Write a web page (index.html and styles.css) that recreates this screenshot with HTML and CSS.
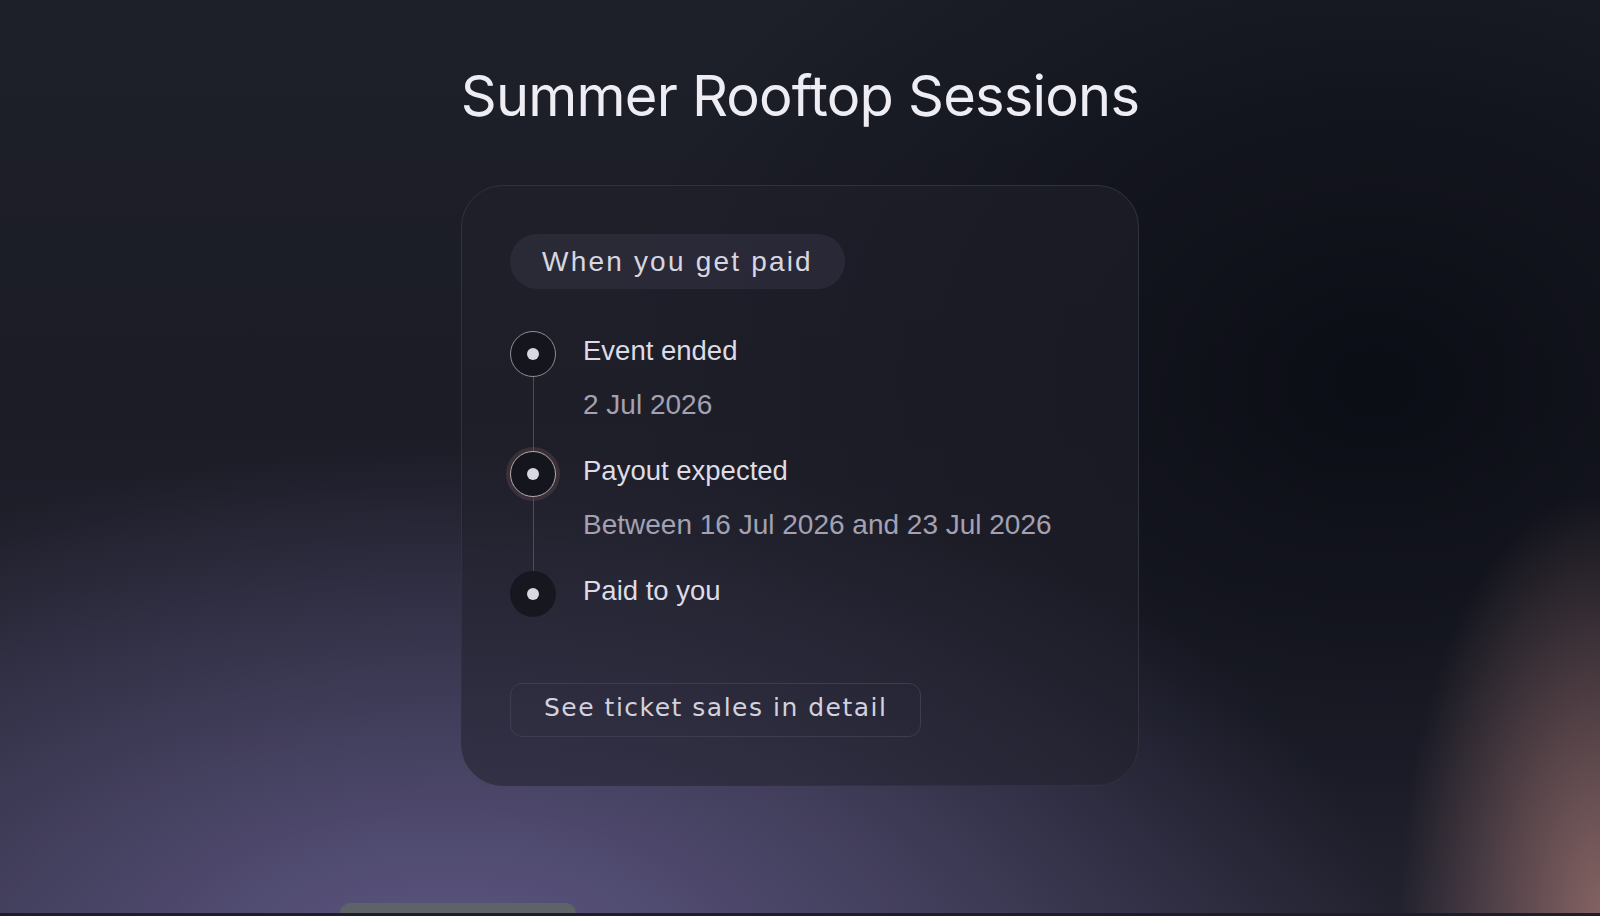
FILE: index.html
```html
<!DOCTYPE html>
<html lang="en">
<head>
<meta charset="utf-8">
<title>Summer Rooftop Sessions</title>
<link rel="stylesheet" href="styles.css">
</head>
<body>
<main class="page">
  <h1 class="title">Summer Rooftop Sessions</h1>
  <section class="card">
    <div class="pill">When you get paid</div>
    <ol class="timeline">
      <li class="step step-done">
        <div class="marker"><span class="dot"></span><span class="line"></span></div>
        <div class="body">
          <div class="step-title">Event ended</div>
          <div class="step-sub">2 Jul 2026</div>
        </div>
      </li>
      <li class="step step-current">
        <div class="marker"><span class="dot"></span><span class="line"></span></div>
        <div class="body">
          <div class="step-title">Payout expected</div>
          <div class="step-sub">Between 16 Jul 2026 and 23 Jul 2026</div>
        </div>
      </li>
      <li class="step step-future step-last">
        <div class="marker"><span class="dot"></span></div>
        <div class="body">
          <div class="step-title">Paid to you</div>
        </div>
      </li>
    </ol>
    <button class="detail-btn" type="button">See ticket sales in detail</button>
  </section>
  <div class="blob" aria-hidden="true"></div>
</main>
</body>
</html>
```
FILE: styles.css
```css
html {
  background: #1d1e2a;
}
body {
  margin: 0;
}
.page {
  position: relative;
  min-height: 913px;
  box-sizing: border-box;
  padding-top: 63px;
  display: flex;
  flex-direction: column;
  align-items: center;
  overflow: hidden;
  background:
    radial-gradient(ellipse 200px 420px at 100% 100%, rgba(132, 98, 98, 1), rgba(132, 98, 98, 0) 100%),
    radial-gradient(ellipse 950px 520px at 28% 106%, rgba(94, 87, 132, 1), rgba(94, 87, 132, 0) 100%),
    radial-gradient(ellipse 760px 620px at 86% 42%, rgba(11, 13, 21, 0.95), rgba(11, 13, 21, 0) 100%),
    linear-gradient(180deg, #1d1f29 0%, #1b1c26 45%, #262634 100%);
}
.title {
  margin: 0;
  font-family: "Inter", "Liberation Sans", sans-serif;
  font-weight: 400;
  font-size: 56px;
  line-height: 67px;
  letter-spacing: -0.8px;
  color: #eeedf3;
}
.card {
  margin-top: 55px;
  width: 678px;
  box-sizing: border-box;
  border: 1px solid #32323f;
  border-radius: 42px;
  padding: 48px;
  background: rgba(32, 32, 44, 0.55);
  display: flex;
  flex-direction: column;
  align-items: flex-start;
}
.pill {
  height: 55px;
  line-height: 55px;
  padding: 0 32px;
  border-radius: 28px;
  background: rgba(58, 56, 74, 0.45);
  font-family: "Liberation Sans", Arial, sans-serif;
  font-size: 28px;
  letter-spacing: 2.2px;
  color: #d7d6e1;
}
.timeline {
  list-style: none;
  margin: 42px 0 0;
  padding: 0;
}
.step {
  display: flex;
  gap: 27px;
}
.marker {
  width: 46px;
  display: flex;
  flex-direction: column;
  align-items: center;
}
.dot {
  width: 46px;
  height: 46px;
  flex: none;
  box-sizing: border-box;
  border-radius: 50%;
  background: #14151d;
  display: flex;
  align-items: center;
  justify-content: center;
}
.dot::after {
  content: "";
  width: 12px;
  height: 12px;
  border-radius: 50%;
  background: #d9d8e3;
}
.step-done .dot {
  border: 1.5px solid #8d9092;
}
.step-current .dot {
  border: 1.5px solid #b3acab;
  box-shadow: 0 0 0 4px rgba(150, 104, 104, 0.22);
}
.step-future .dot {
  width: 44px;
  height: 44px;
  margin: 1px 0;
  background: #16171f;
  box-shadow: 0 0 0 1px rgba(10, 10, 16, 0.5);
}
.line {
  flex: 1;
  width: 1px;
  background: #4c4c5a;
}
.body {
  padding-top: 4px;
  padding-bottom: 30px;
  font-family: "Liberation Sans", Arial, sans-serif;
}
.step-last .body {
  padding-bottom: 0;
}
.step-title {
  font-size: 27.5px;
  line-height: 32px;
  color: #dddce6;
}
.step-sub {
  margin-top: 22px;
  font-size: 28px;
  line-height: 32px;
  color: #a3a1b2;
}
.detail-btn {
  margin-top: 66px;
  padding: 10px 33px 14px;
  border: 1px solid #3e3c51;
  border-radius: 12px;
  background: transparent;
  font-family: "DejaVu Sans", sans-serif;
  font-size: 25px;
  line-height: 28px;
  letter-spacing: 1.5px;
  color: #d2d1dd;
}
.blob {
  position: absolute;
  left: 340px;
  bottom: 0;
  width: 236px;
  height: 10px;
  border-radius: 40px 40px 0 0;
  background: #5d6367;
}
```
